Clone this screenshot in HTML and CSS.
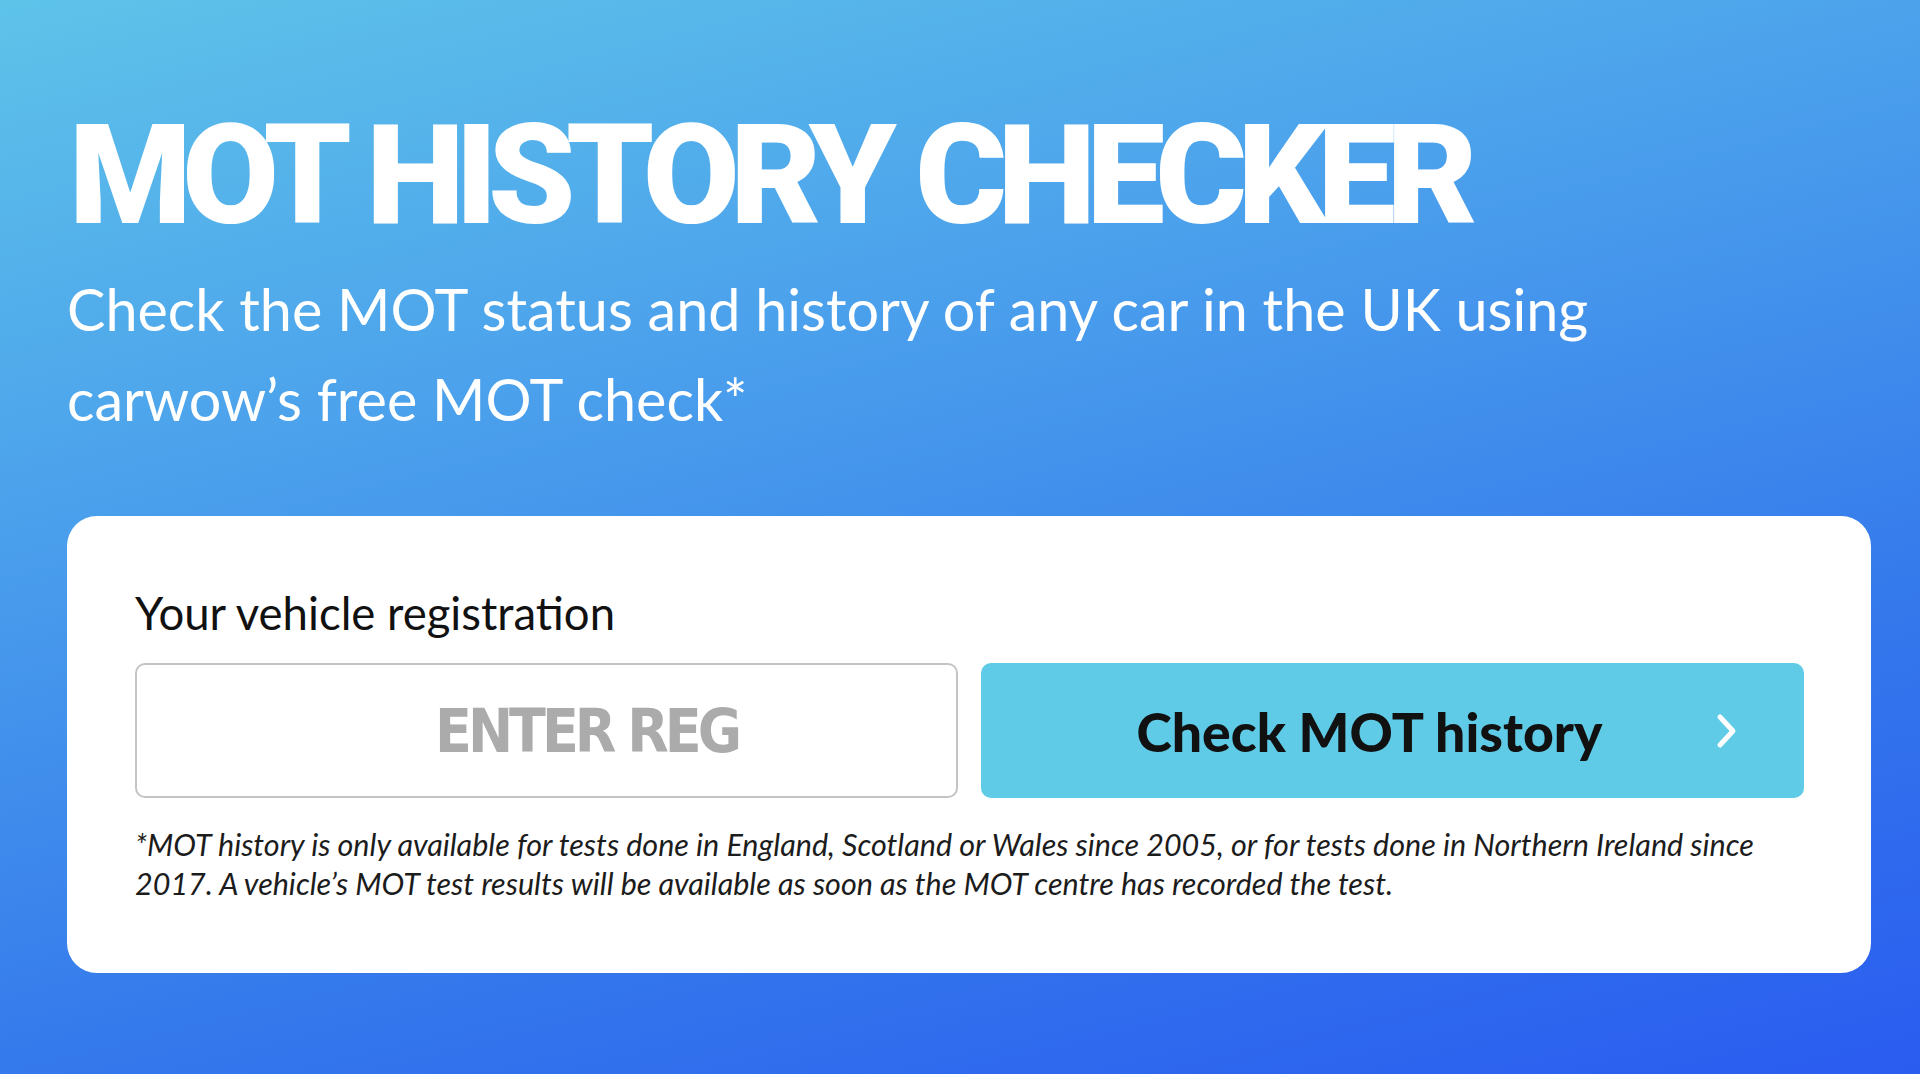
FILE: index.html
```html
<!DOCTYPE html>
<html lang="en">
<head>
<meta charset="utf-8">
<title>MOT History Checker</title>
<link rel="stylesheet" href="styles.css">
</head>
<body>
<main class="hero">
  <h1 class="hero-title">MOT HISTORY CHECKER</h1>
  <p class="hero-sub">Check the MOT status and history of any car in the UK using carwow’s free MOT check*</p>
  <section class="card">
    <label class="card-label" for="reg">Your vehicle registration</label>
    <div class="card-row">
      <input id="reg" class="reg-input" type="text" placeholder="ENTER REG">
      <button class="check-btn" type="button">
        <span class="check-btn-text">Check MOT history</span>
        <svg class="check-btn-icon" width="22" height="36" viewBox="0 0 22 36" aria-hidden="true"><path d="M4 4 L17 18 L4 32" fill="none" stroke="#fff" stroke-width="5" stroke-linecap="round" stroke-linejoin="round"/></svg>
      </button>
    </div>
    <p class="card-note">*MOT history is only available for tests done in England, Scotland or Wales since 2005, or for tests done in Northern Ireland since 2017. A vehicle’s MOT test results will be available as soon as the MOT centre has recorded the test.</p>
  </section>
</main>
</body>
</html>
```
FILE: styles.css
```css
html, body {
  margin: 0;
  padding: 0;
  height: 100%;
}
body {
  background: linear-gradient(166deg, #5ec3e9 0%, #4a9fec 35%, #3478ec 70%, #2a5cf0 100%);
  font-family: "Lato", "Inter", sans-serif;
  overflow: hidden;
}
.hero {
  padding: 0 49px 0 67px;
  box-sizing: border-box;
  width: 1920px;
  height: 1074px;
  display: flex;
  flex-direction: column;
}
.hero-title {
  margin: 100px 0 0 2px;
  font-family: "Roboto", sans-serif;
  font-weight: 900;
  font-size: 140px;
  line-height: 150px;
  letter-spacing: -0.068em;
  word-spacing: 0.02em;
  color: #fff;
}
.hero-sub {
  margin: 14px 0 0 0;
  width: 1650px;
  font-family: "Lato", sans-serif;
  font-size: 57.5px;
  line-height: 90px;
  color: #fff;
}
.card {
  margin-top: 72px;
  background: #fff;
  border-radius: 30px;
  width: 1804px;
  height: 457px;
  box-sizing: border-box;
  padding: 72px 67px 0 68px;
  display: flex;
  flex-direction: column;
}
.card-label {
  font-family: "Lato", sans-serif;
  font-size: 45.5px;
  line-height: 50px;
  color: #111;
}
.card-row {
  margin-top: 25px;
  display: grid;
  grid-template-columns: minmax(0, 1fr) minmax(0, 1fr);
  gap: 23px;
  height: 135px;
}
.reg-input {
  width: 100%;
  min-width: 0;
  box-sizing: border-box;
  border: 2px solid #c4c4c4;
  border-radius: 10px;
  background: #fff;
  font-family: "DejaVu Sans Condensed", "DejaVu Sans", sans-serif;
  font-weight: bold;
  font-size: 60px;
  letter-spacing: -4px;
  text-align: center;
  color: #111;
  padding: 0 0 0 80px;
  outline: none;
}
.reg-input::placeholder {
  color: #ababab;
}
.check-btn {
  width: 100%;
  box-sizing: border-box;
  border: none;
  border-radius: 10px;
  background: #5fcbe6;
  display: flex;
  align-items: center;
  justify-content: center;
  position: relative;
  padding: 0;
  cursor: pointer;
}
.check-btn-text {
  font-family: "Lato", sans-serif;
  font-weight: 900;
  font-size: 53.5px;
  color: #111;
  margin-left: -46px;
}
.check-btn-icon {
  position: absolute;
  right: 66px;
  top: 50%;
  transform: translateY(-50%);
}
.card-note {
  margin: 27px 0 0 0;
  max-width: 1650px;
  font-family: "Lato", sans-serif;
  font-style: italic;
  font-size: 30.5px;
  line-height: 39px;
  color: #1c1c1c;
}
```
